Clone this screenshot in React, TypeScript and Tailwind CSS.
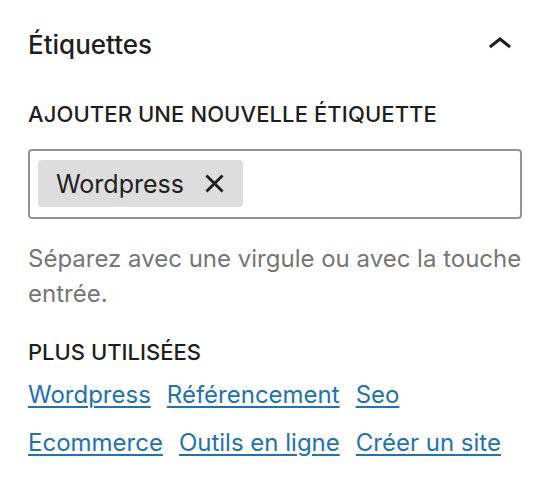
import { useState } from 'react';

const popular = [
  'Wordpress',
  'Référencement',
  'Seo',
  'Ecommerce',
  'Outils en ligne',
  'Créer un site',
];

export default function App() {
  const [tags, setTags] = useState(['Wordpress']);

  return (
    <div className="h-[502px] w-[550px] bg-white px-[28px] pt-[29px] font-['Inter',sans-serif] text-[#1e1e1e]">
      <div className="flex h-[32px] items-center justify-between">
        <h2 className="text-[26px] leading-[32px] font-medium">Étiquettes</h2>
        <svg viewBox="0 0 24 24" className="-mr-[2px] h-[48px] w-[48px] shrink-0" fill="#1e1e1e">
          <path d="M6.5 12.4L12 8l5.5 4.4-.9 1.2L12 10l-4.6 3.6-1-1.2z" />
        </svg>
      </div>

      <div className="mt-[39px] text-[22px] leading-[28px] font-medium tracking-[0.1px] uppercase">
        Ajouter une nouvelle étiquette
      </div>

      <div className="mt-[21px] flex h-[70px] items-start rounded-[4px] border-2 border-[#949494] p-[9px] pl-[8px]">
        {tags.map((tag) => (
          <span
            key={tag}
            className="flex h-[47px] items-center gap-[21px] rounded-[4px] bg-[#dddddd] pr-[19px] pl-[18px] text-[25px] leading-[32px]"
          >
            {tag}
            <button onClick={() => setTags(tags.filter((t) => t !== tag))}>
              <svg viewBox="7 7 10 10" className="h-[19px] w-[19px]" fill="#1e1e1e">
                <path d="M12 13.06l3.712 3.713 1.061-1.06L13.061 12l3.712-3.712-1.06-1.06L12 10.938 8.288 7.227l-1.061 1.06L10.939 12l-3.712 3.712 1.06 1.061L12 13.061z" />
              </svg>
            </button>
          </span>
        ))}
      </div>

      <p className="mt-[22px] text-[24px] leading-[35px] text-[#757575]">
        Séparez avec une virgule ou avec la touche entrée.
      </p>

      <div className="mt-[27px] text-[22px] leading-[28px] font-medium uppercase">
        Plus utilisées
      </div>

      <div className="mt-[13px] flex flex-wrap gap-x-[16px] gap-y-[16px]">
        {popular.map((name) => (
          <a
            key={name}
            href="#"
            className="text-[24px] leading-[32px] text-[#2271b1] underline decoration-2 underline-offset-[3px]"
          >
            {name}
          </a>
        ))}
      </div>
    </div>
  );
}
